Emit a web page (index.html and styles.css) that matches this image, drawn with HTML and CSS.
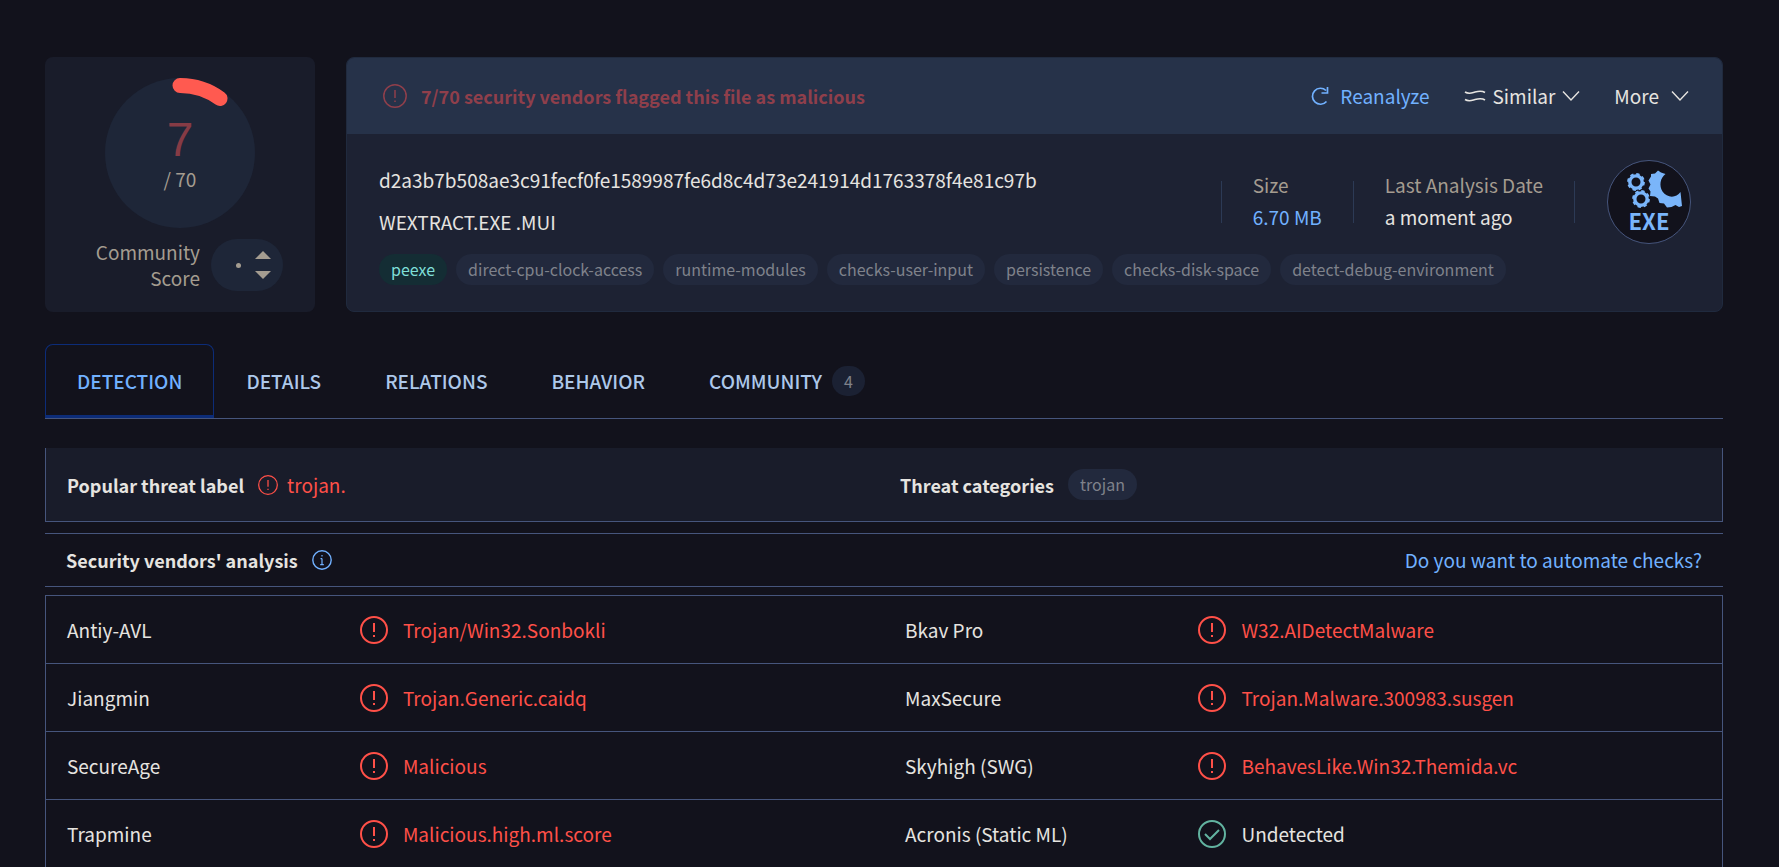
FILE: index.html
```html
<!DOCTYPE html>
<html lang="en">
<head>
<meta charset="utf-8">
<title>File report</title>
<link rel="stylesheet" href="styles.css">
</head>
<body>
<svg class="sprite" aria-hidden="true">
  <symbol id="alert" viewBox="0 0 28 28"><circle cx="14" cy="14" r="13" fill="none" stroke="currentColor" stroke-width="2"/><path d="M14 7v9M14 19v2" fill="none" stroke="currentColor" stroke-width="2"/></symbol>
  <symbol id="alert-thin" viewBox="0 0 24 24"><circle cx="12" cy="12" r="11.2" fill="none" stroke="currentColor" stroke-width="1.5"/><path d="M12 6v8M12 16.500v1.600" fill="none" stroke="currentColor" stroke-width="1.500"/></symbol>
  <symbol id="check" viewBox="0 0 28 28"><circle cx="14" cy="14" r="13" fill="none" stroke="currentColor" stroke-width="2"/><path d="M7 14l5 5 9-9" fill="none" stroke="currentColor" stroke-width="2"/></symbol>
  <symbol id="chevron" viewBox="0 0 18 12"><path d="M1 1.500l8 8.500 8-8.500" fill="none" stroke="currentColor" stroke-width="1.400"/></symbol>
  <symbol id="gear" viewBox="-8 -8 16 16"><circle r="5.500" fill="none" stroke="currentColor" stroke-width="3"/><circle r="7" fill="none" stroke="currentColor" stroke-width="1.800" stroke-dasharray="3 2.500"/></symbol>
</svg>
<main class="page">
  <section class="summary">
    <div class="card score-card">
      <div class="dial">
        <svg class="dial-ring" viewBox="0 0 150 150" aria-hidden="true">
          <circle cx="75" cy="75" r="75" fill="#1e2638"/>
          <path d="M75 7.500A67.500 67.500 0 0 1 115 20.500" fill="none" stroke="#ff5a50" stroke-width="15" stroke-linecap="round"/>
        </svg>
        <div class="dial-text"><span class="dial-value">7</span><span class="dial-total">/ 70</span></div>
      </div>
      <div class="community">
        <span class="community-label">Community Score</span>
        <div class="vote">
          <span class="dot"></span>
          <span class="vote-buttons">
            <button class="up" aria-label="Vote up"></button>
            <button class="down" aria-label="Vote down"></button>
          </span>
        </div>
      </div>
    </div>
    <div class="card file-card">
      <header class="file-head">
        <div class="verdict"><svg class="icon-24"><use href="#alert-thin"/></svg>7/70 security vendors flagged this file as malicious</div>
        <div class="actions">
          <button class="action reanalyze">
            <svg class="icon-20" viewBox="0 0 20 20"><path d="M16.500 15.500A8 8 0 1 1 16 4.500M17.500 1v6h-6" fill="none" stroke="currentColor" stroke-width="1.700"/></svg>Reanalyze</button>
          <button class="action similar">
            <svg class="icon-wave" viewBox="0 0 22 14"><path d="M1 3c4 2.500 6.500 1 10 0s7-1.500 10 .5M1 10.500c4 2.500 6.500 1 10 0s7-1.500 10 .5" fill="none" stroke="currentColor" stroke-width="1.600"/></svg>Similar<svg class="icon-chevron"><use href="#chevron"/></svg></button>
          <button class="action more">More<svg class="icon-chevron"><use href="#chevron"/></svg></button>
        </div>
      </header>
      <div class="file-body">
        <div class="file-main">
          <div class="names">
            <div class="hash">d2a3b7b508ae3c91fecf0fe1589987fe6d8c4d73e241914d1763378f4e81c97b</div>
            <div class="name">WEXTRACT.EXE .MUI</div>
          </div>
          <div class="facts">
            <div class="fact"><span class="fact-label">Size</span><a class="link" href="#">6.70 MB</a></div>
            <div class="fact"><span class="fact-label">Last Analysis Date</span><span>a moment ago</span></div>
            <div class="fact-end"></div>
            <div class="exe">
              <svg class="exe-art" viewBox="0 0 82 48" aria-hidden="true">
                <svg x="19" y="12" width="18" height="18"><use href="#gear"/></svg>
                <svg x="24" y="29" width="18" height="18"><use href="#gear"/></svg>
                <path d="M43 13l4-.5 3-3 3 2 4.500 1.500C52 17 51 25 54.500 30.500 59 37 68 37.500 72.500 31L74 45l-3 1-3.500-2-4 2-4.500.5-3-4-4.500-.5-1.500-4.500-3-2-5-.5.500-4.500-2-3 2-4-2-4 2.500-4z" fill="currentColor"/>
              </svg>
              <span class="exe-text">EXE</span>
            </div>
          </div>
        </div>
        <div class="tags">
          <a class="tag green" href="#">peexe</a><a class="tag" href="#">direct-cpu-clock-access</a><a class="tag" href="#">runtime-modules</a><a class="tag" href="#">checks-user-input</a><a class="tag" href="#">persistence</a><a class="tag" href="#">checks-disk-space</a><a class="tag" href="#">detect-debug-environment</a>
        </div>
      </div>
    </div>
  </section>
  <nav class="tabs">
    <a class="tab active" href="#">DETECTION</a>
    <a class="tab" href="#">DETAILS</a>
    <a class="tab" href="#">RELATIONS</a>
    <a class="tab" href="#">BEHAVIOR</a>
    <a class="tab" href="#">COMMUNITY<span class="count">4</span></a>
  </nav>
  <section class="threat">
    <div class="threat-cell"><strong>Popular threat label</strong><a class="threat-name red" href="#"><svg class="icon-20"><use href="#alert-thin"/></svg>trojan.</a></div>
    <div class="threat-cell"><strong>Threat categories</strong><span class="tag">trojan</span></div>
  </section>
  <div class="analysis-head">
    <strong>Security vendors' analysis</strong>
    <svg class="icon-20 info" viewBox="0 0 20 20"><circle cx="10" cy="10" r="9.200" fill="none" stroke="currentColor" stroke-width="1.400"/><path d="M10 8.500V15M10 5v1.500M8.500 8.700H10M8.200 14.600h3.600" fill="none" stroke="currentColor" stroke-width="1.200"/></svg>
    <a class="link automate" href="#">Do you want to automate checks?</a>
  </div>
  <table class="vendors">
    <colgroup><col class="c-name"><col class="c-result"><col class="c-name"><col class="c-result"></colgroup>
    <tbody>
    <tr><td>Antiy-AVL</td><td><span class="result red"><svg class="icon-28"><use href="#alert"/></svg>Trojan/Win32.Sonbokli</span></td><td>Bkav Pro</td><td><span class="result red"><svg class="icon-28"><use href="#alert"/></svg>W32.AIDetectMalware</span></td></tr>
    <tr><td>Jiangmin</td><td><span class="result red"><svg class="icon-28"><use href="#alert"/></svg>Trojan.Generic.caidq</span></td><td>MaxSecure</td><td><span class="result red"><svg class="icon-28"><use href="#alert"/></svg>Trojan.Malware.300983.susgen</span></td></tr>
    <tr><td>SecureAge</td><td><span class="result red"><svg class="icon-28"><use href="#alert"/></svg>Malicious</span></td><td>Skyhigh (SWG)</td><td><span class="result red"><svg class="icon-28"><use href="#alert"/></svg>BehavesLike.Win32.Themida.vc</span></td></tr>
    <tr><td>Trapmine</td><td><span class="result red"><svg class="icon-28"><use href="#alert"/></svg>Malicious.high.ml.score</span></td><td>Acronis (Static ML)</td><td><span class="result"><svg class="icon-28 ok"><use href="#check"/></svg>Undetected</span></td></tr>
    </tbody>
  </table>
</main>
</body>
</html>
```
FILE: styles.css
```css
* { box-sizing: border-box; }
html { overflow: hidden; }
body {
  margin: 0;
  background: #12121c;
  color: #e6e4e0;
  font: 19px/26px "Noto Sans CJK SC", "Source Sans Pro", sans-serif;
}
a { color: inherit; text-decoration: none; }
button { font: inherit; color: inherit; background: none; border: 0; padding: 0; cursor: pointer; }
svg { display: block; flex: none; }
strong { font-weight: 700; font-size: 18px; }
.sprite { position: absolute; width: 0; height: 0; }
.page { padding: 57px 56px 0 45px; }
.icon-20 { width: 20px; height: 20px; }
.icon-24 { width: 24px; height: 24px; }
.icon-28 { width: 28px; height: 28px; }
.icon-chevron { width: 18px; height: 12px; }
.icon-wave { width: 22px; height: 14px; }
.red { color: #ff5048; }
.ok { color: #62b3a0; }
.link, .info { color: #71b1ff; }

.summary { display: grid; grid-template-columns: 270px 1fr; gap: 31px; }
.card { border-radius: 8px; overflow: hidden; }
.score-card { background: #191c2a; padding: 21px 32px; display: flex; flex-direction: column; gap: 11px; }
.dial { display: grid; width: 150px; height: 150px; margin: 0 auto; }
.dial-ring, .dial-text { grid-area: 1 / 1; }
.dial-text { display: flex; flex-direction: column; align-items: center; padding-top: 36px; }
.dial-value { color: #863b45; font-size: 48px; line-height: 52px; font-family: "Liberation Sans", sans-serif; }
.dial-total, .community-label, .fact-label { color: #a49c90; }
.community { display: flex; justify-content: flex-end; align-items: center; gap: 11px; }
.community-label { width: 110px; text-align: right; }
.vote { display: flex; align-items: center; justify-content: flex-end; gap: 14px; width: 72px; height: 52px; padding-right: 12px; border-radius: 26px; background: #1e2638; }
.dot { width: 5px; height: 5px; border-radius: 50%; background: #a49c90; }
.vote-buttons { display: flex; flex-direction: column; gap: 12px; }
.up, .down { width: 16px; height: 8px; background: #a49c90; }
.up { clip-path: polygon(50% 0, 100% 100%, 0 100%); }
.down { clip-path: polygon(0 0, 100% 0, 50% 100%); }

.file-card { background: #1d2233; border: 1px solid #202a3e; }
.file-head { display: flex; align-items: center; justify-content: space-between; height: 76px; padding: 0 33px 1px 36px; background: #263249; }
.verdict { display: flex; align-items: center; gap: 14px; color: #8f3f4b; font-weight: 700; font-size: 18px; }
.actions, .action { display: flex; align-items: center; }
.actions { gap: 34px; }
.action { gap: 7px; }
.reanalyze { color: #71b1ff; gap: 10px; }
.more { gap: 12px; }
.file-body { padding: 26px 31px 0 32px; }
.file-main { display: flex; justify-content: space-between; }
.names { display: flex; flex-direction: column; gap: 16px; padding-top: 7px; }
.facts { display: flex; align-items: flex-start; }
.fact { display: flex; flex-direction: column; position: relative; gap: 6px; padding: 12px 31px 0 32px; }
.fact::before, .fact-end { content: ""; width: 1px; height: 42px; background: #2c3a55; }
.fact::before { position: absolute; left: 0; top: 21px; }
.fact-end { margin-top: 21px; }
.exe { display: flex; flex-direction: column; align-items: center; width: 84px; height: 84px; margin-left: 32px; border: 1px solid #46557c; border-radius: 50%; background: #12121c; color: #7ab5fa; }
.exe-art { width: 82px; height: 48px; }
.exe-text { font-weight: 700; font-size: 22px; line-height: 22px; }
.tags { display: flex; gap: 9px; margin-top: 10px; }
.tag { padding: 0 12px; border-radius: 16px; background: #22293d; color: #7f828b; font-size: 16px; line-height: 31px; }
.tag.green { background: #142d34; color: #7fdfd8; }

.tabs { display: flex; height: 75px; margin-top: 32px; border-bottom: 1px solid #46557c; }
.tab { display: flex; align-items: center; gap: 10px; padding: 0 32px; color: #adc8ea; font-weight: 500; }
.tab.active { color: #71b1ff; border: 1px solid #0c2c78; border-bottom-width: 3px; border-radius: 8px 8px 0 0; padding: 2px 31px 0; }
.count { padding: 0 12px; border-radius: 15px; background: #1b2133; color: #7f828b; font-size: 16px; line-height: 30px; font-weight: 400; }

.threat { display: grid; grid-template-columns: 1fr 1fr; column-gap: 11px; height: 74px; margin-top: 29px; padding-left: 21px; border: 1px solid #46557c; border-top: 0; background: #191c2a; }
.threat-cell { display: flex; align-items: center; gap: 14px; }
.threat-name { display: flex; align-items: center; gap: 9px; }
.analysis-head { display: flex; align-items: center; gap: 14px; height: 54px; margin-top: 11px; padding: 0 21px 1px; border: solid #46557c; border-width: 1px 0; }
.automate { margin-left: auto; }
.vendors { width: 100%; margin-top: 8px; table-layout: fixed; border-collapse: collapse; border: 1px solid #46557c; }
.vendors tr { border-bottom: 1px solid #46557c; }
.vendors td { height: 68px; padding: 0 21px; white-space: nowrap; }
.vendors td:nth-child(even) { padding-left: 0; }
.c-name { width: 18.750%; }
.c-result { width: 31.250%; }
.result { display: flex; align-items: center; gap: 15px; }
```
